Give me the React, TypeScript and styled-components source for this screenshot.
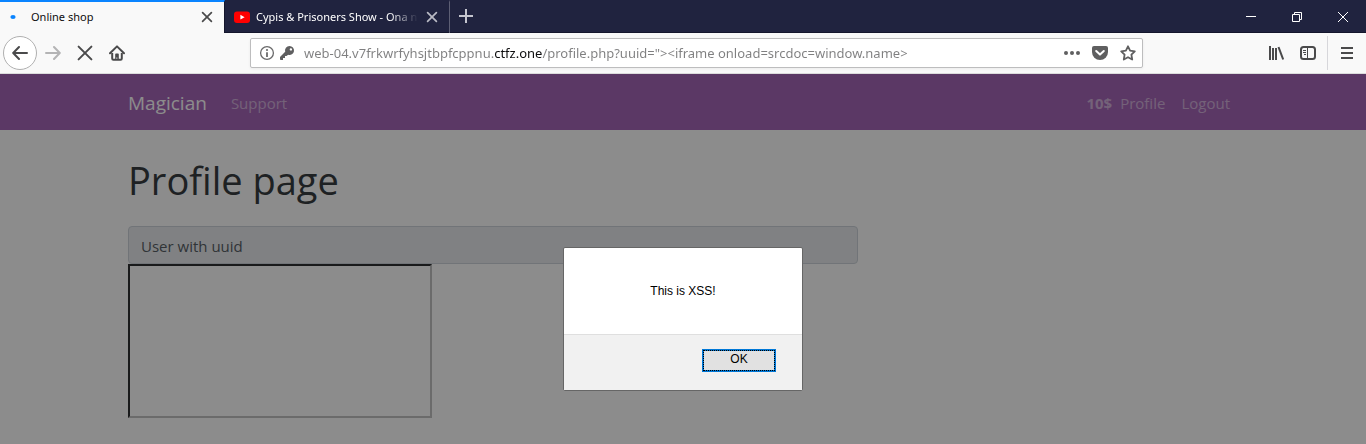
import React from "react";
import styled, { createGlobalStyle } from "styled-components";

const GlobalStyle = createGlobalStyle`
  *, *::before, *::after { box-sizing: border-box; }
  html, body, #root { height: 100%; }
  body {
    margin: 0;
    font-family: "Open Sans", "Noto Sans", sans-serif;
    background: #fff;
  }
  button, input { font-family: inherit; }
`;

const Window = styled.div`
  display: flex;
  flex-direction: column;
  min-height: 100%;
`;

/* ---- tab strip ---- */

const TabStrip = styled.div`
  display: flex;
  height: 33px;
  background: #20233f;
  box-shadow: inset 0 -1px 0 #14162c;
`;

const Tab = styled.div<{ $active?: boolean }>`
  display: flex;
  align-items: center;
  flex: 0 1 225px;
  min-width: 0;
  padding: 0 9px 2px ${(p) => (p.$active ? "5px" : "9px")};
  gap: ${(p) => (p.$active ? "10px" : "6px")};
  color: ${(p) => (p.$active ? "#0c0c0d" : "#ffffff")};
  background: ${(p) => (p.$active ? "#f9f9f9" : "transparent")};
  border-top: 2px solid ${(p) => (p.$active ? "#0a84ff" : "transparent")};
  border-right: 1px solid ${(p) => (p.$active ? "#14162c" : "#5d5f74")};
`;

const TabTitle = styled.span<{ $fade?: boolean }>`
  flex: 1;
  min-width: 0;
  overflow: hidden;
  white-space: nowrap;
  font-family: "Noto Sans", "Open Sans", sans-serif;
  font-size: 11px;
  line-height: 18px;
  ${(p) => p.$fade && "mask-image: linear-gradient(to left, transparent, #000 28px);"}
`;

const GlyphButton = styled.button<{ $color?: string; $width?: number; $height?: number }>`
  display: flex;
  flex: none;
  align-items: center;
  justify-content: center;
  width: ${(p) => p.$width ?? 16}px;
  height: ${(p) => p.$height ?? 16}px;
  padding: 0;
  border: 0;
  background: none;
  color: ${(p) => p.$color ?? "#4a4a4b"};
`;

const WindowControls = styled.div`
  display: flex;
  margin-left: auto;
`;

/* ---- navigation toolbar ---- */

const Toolbar = styled.div`
  display: flex;
  align-items: center;
  height: 41px;
  padding-left: 3px;
  background: #f9f9f9;
  border-bottom: 1px solid #dcdcdc;
`;

const BackButton = styled.button`
  display: flex;
  flex: none;
  align-items: center;
  justify-content: center;
  width: 34px;
  height: 34px;
  padding: 0;
  border: 1px solid #b0b0b0;
  border-radius: 50%;
  background: #fff;
  color: #4a4a4b;
`;

const Spacer = styled.div`
  flex: 0 1 117px;
`;

const UrlBar = styled.div`
  display: flex;
  flex: 1;
  align-items: center;
  min-width: 0;
  height: 30px;
  padding: 0 6px 0 8px;
  gap: 4px;
  border: 1px solid #bdbdbe;
  border-radius: 2px;
  background: #fff;
  box-shadow: 0 1px 3px rgba(0, 0, 0, 0.06);
`;

const UrlInput = styled.input`
  flex: 1;
  min-width: 0;
  height: 24px;
  margin-left: 5px;
  padding: 0;
  border: 0;
  outline: 0;
  font-family: "Noto Sans", "Open Sans", sans-serif;
  font-size: 13px;
  color: transparent;
  caret-color: #0c0c0d;
  background: linear-gradient(90deg, #7f7f80 190px, #0c0c0d 190px 238px, #7f7f80 238px);
  background-clip: text;
  -webkit-background-clip: text;
`;

const UrlActions = styled.div`
  display: flex;
  gap: 12px;
`;

const Divider = styled.div`
  width: 1px;
  height: 34px;
  margin-left: 3px;
  background: #d7d7db;
`;

/* ---- web page ---- */

const Page = styled.main`
  position: relative;
  flex: 1;
  background: #fff;
  color: #383c41;
`;

const Container = styled.div`
  width: 100%;
  max-width: 1140px;
  margin: 0 auto;
  padding: 0 15px;
`;

const Navbar = styled.nav`
  background: #a766b9;
`;

const NavRow = styled(Container)`
  display: flex;
  align-items: center;
  height: 56px;
  padding-top: 2px;
`;

const Brand = styled.a`
  margin-right: 16px;
  color: #fff;
  font-size: 19px;
  line-height: 30px;
  text-decoration: none;
`;

const NavLink = styled.a`
  padding: 8px;
  color: rgba(255, 255, 255, 0.5);
  font-size: 15px;
  line-height: 24px;
  text-decoration: none;
`;

const Balance = styled.strong`
  margin-left: auto;
  color: rgba(255, 255, 255, 0.5);
  font-size: 15px;
  line-height: 24px;
`;

const Title = styled.h1`
  margin: 0 0 22px;
  padding-top: 26px;
  font-size: 38px;
  font-weight: 400;
  line-height: 48px;
`;

const Column = styled.div`
  width: 100%;
  max-width: 730px;
`;

const UserField = styled.div`
  height: 38px;
  padding: 6px 12px;
  border: 1px solid #ced4da;
  border-radius: 4px;
  background: #e9ecef;
  color: #585f66;
  font-size: 15px;
  line-height: 26px;
`;

const Frame = styled.iframe`
  display: block;
  box-sizing: content-box;
  width: 300px;
  height: 150px;
  border: 2px solid;
  border-color: #2f3032 #c3c3c3 #c3c3c3 #2f3032;
`;

const Overlay = styled.div`
  position: absolute;
  inset: 0;
  display: flex;
  align-items: flex-start;
  justify-content: center;
  padding-top: 173px;
  background: rgba(0, 0, 0, 0.45);
`;

const Dialog = styled.div`
  width: 240px;
  border: 1px solid #666;
  border-radius: 2px;
  background: #fff;
  color: #000;
  font-family: "Liberation Sans", Arial, sans-serif;
  font-size: 12px;
`;

const DialogMessage = styled.p`
  margin: 0;
  padding: 35px 20px;
  line-height: 16px;
  text-align: center;
`;

const DialogFooter = styled.div`
  display: flex;
  justify-content: flex-end;
  padding: 14px 26px 18px;
  border-top: 1px solid #dfdfdf;
  background: #f1f1f1;
`;

const OkButton = styled.button`
  display: flex;
  width: 74px;
  height: 23px;
  padding: 0;
  border: 1px solid #0078d7;
  background: #0078d7;
  color: #000;
  font-size: 12px;
  line-height: 17px;
`;

const FocusRing = styled.span`
  flex: 1;
  height: 21px;
  border: 1px dotted #000;
  background: #e1e1e1 padding-box;
`;

/* ---- drawings ---- */

const Icon = ({ size = 16, children }: { size?: number; children: React.ReactNode }) => (
  <svg width={size} height={size} viewBox={`0 0 ${size} ${size}`} fill="none" stroke="currentColor" aria-hidden="true">
    {children}
  </svg>
);

const Cross = ({ inset, weight }: { inset: number; weight: number }) => (
  <Icon>
    <path
      d={`M${inset} ${inset}L${16 - inset} ${16 - inset}M${16 - inset} ${inset}L${inset} ${16 - inset}`}
      strokeWidth={weight}
      strokeLinecap="round"
    />
  </Icon>
);

const PAGE_URL = 'web-04.v7frkwrfyhsjtbpfcppnu.ctfz.one/profile.php?uuid="><iframe onload=srcdoc=window.name>';

export default function App() {
  return (
    <>
      <GlobalStyle />
      <Window>
        <TabStrip>
          <Tab $active>
            <Icon>
              <ellipse cx="8" cy="8" rx="2.6" ry="2" fill="#0a84ff" stroke="none" />
            </Icon>
            <TabTitle>Online shop</TabTitle>
            <GlyphButton aria-label="Close tab">
              <Cross inset={3.6} weight={1.7} />
            </GlyphButton>
          </Tab>
          <Tab>
            <Icon>
              <rect x="0" y="2.5" width="16" height="11.5" rx="3" fill="#f00" stroke="none" />
              <path d="M6.4 5.8v4.8l4.2-2.4z" fill="#fff" stroke="none" />
            </Icon>
            <TabTitle $fade>Cypis &amp; Prisoners Show - Ona n</TabTitle>
            <GlyphButton aria-label="Close tab" $color="#b9bac4">
              <Cross inset={3.6} weight={1.7} />
            </GlyphButton>
          </Tab>
          <GlyphButton aria-label="New tab" $color="#c4c5cf" $width={32} $height={32}>
            <Icon>
              <path d="M8 1v14M1 8h14" strokeWidth="2" />
            </Icon>
          </GlyphButton>
          <WindowControls>
            <GlyphButton aria-label="Minimize" $color="#fff" $width={46} $height={32}>
              <Icon>
                <path d="M3 8.5h10" />
              </Icon>
            </GlyphButton>
            <GlyphButton aria-label="Restore" $color="#fff" $width={46} $height={32}>
              <Icon>
                <path d="M3.5 6.5h7v7h-7zM5.5 6.5v-2h7v7h-2" />
              </Icon>
            </GlyphButton>
            <GlyphButton aria-label="Close" $color="#fff" $width={46} $height={32}>
              <Icon>
                <path d="M3 4l10 10M13 4L3 14" />
              </Icon>
            </GlyphButton>
          </WindowControls>
        </TabStrip>

        <Toolbar>
          <BackButton aria-label="Back">
            <Icon>
              <path d="M15 8H1.5M7 2L1.2 8 7 14" strokeWidth="2" strokeLinecap="round" strokeLinejoin="round" />
            </Icon>
          </BackButton>
          <GlyphButton aria-label="Forward" $color="#b4b4b5" $width={32} $height={32}>
            <Icon>
              <path d="M1 8h13.5M9 2l5.8 6L9 14" strokeWidth="2" strokeLinecap="round" strokeLinejoin="round" />
            </Icon>
          </GlyphButton>
          <GlyphButton aria-label="Stop" $width={32} $height={32}>
            <Cross inset={1.6} weight={2} />
          </GlyphButton>
          <GlyphButton aria-label="Home" $width={32} $height={32}>
            <Icon>
              <path d="M1 8.2L8 1.4l7 6.8" strokeWidth="2" strokeLinecap="round" strokeLinejoin="round" />
              <path d="M3.2 8v5.6q0 1.2 1.2 1.2h7.2q1.2 0 1.2-1.2V8" strokeWidth="2" />
              <path d="M6.2 14.5V9.2q0-.8.8-.8h2q.8 0 .8.8v5.3h-1.5v-2h-.9v2z" fill="currentColor" stroke="none" />
            </Icon>
          </GlyphButton>
          <Spacer />
          <UrlBar>
            <GlyphButton aria-label="Site information" $color="#6a6a6b">
              <Icon>
                <circle cx="8" cy="8" r="6.4" strokeWidth="1.3" />
                <path d="M8 7.2V12" strokeWidth="1.8" />
                <circle cx="8" cy="5" r="1.1" fill="currentColor" stroke="none" />
              </Icon>
            </GlyphButton>
            <GlyphButton aria-label="Saved login" $color="#5f5f60">
              <Icon>
                <path
                  fillRule="evenodd"
                  d="M10.5 1a4.5 4.5 0 0 0-4.3 5.8L1 12v2.2q0 .8.8.8H4v-2h2v-2h1.5l1.7-1.2A4.5 4.5 0 1 0 10.5 1zm1.4 2.2a1.2 1.2 0 1 1 0 2.4 1.2 1.2 0 0 1 0-2.4z"
                  fill="currentColor"
                  stroke="none"
                />
              </Icon>
            </GlyphButton>
            <UrlInput aria-label="Address" defaultValue={PAGE_URL} spellCheck={false} />
            <UrlActions>
              <GlyphButton aria-label="Page actions" $color="#5f5f60">
                <Icon>
                  <g fill="currentColor" stroke="none">
                    <circle cx="2" cy="8" r="2" />
                    <circle cx="8" cy="8" r="2" />
                    <circle cx="14" cy="8" r="2" />
                  </g>
                </Icon>
              </GlyphButton>
              <GlyphButton aria-label="Save to Pocket" $color="#5f5f60">
                <Icon>
                  <path d="M2 1h12q2 0 2 2v4a8 8 0 0 1-16 0V3q0-2 2-2z" fill="currentColor" stroke="none" />
                  <path d="M4.2 6L8 9.6 11.8 6" stroke="#fff" strokeWidth="2" strokeLinecap="round" strokeLinejoin="round" />
                </Icon>
              </GlyphButton>
              <GlyphButton aria-label="Bookmark" $color="#5f5f60">
                <Icon>
                  <path
                    d="M8 1.3l2.1 4.3 4.7.7-3.4 3.4.8 4.8L8 12.2l-4.2 2.3.8-4.8L1.2 6.3l4.7-.7z"
                    strokeWidth="1.8"
                    strokeLinejoin="round"
                  />
                </Icon>
              </GlyphButton>
            </UrlActions>
          </UrlBar>
          <Spacer />
          <GlyphButton aria-label="Library" $width={32} $height={32}>
            <Icon>
              <path d="M2 1v14M5 3v12M8 3v12" strokeWidth="2" />
              <path d="M10.5 2l4.7 12.5" strokeWidth="2" />
            </Icon>
          </GlyphButton>
          <GlyphButton aria-label="Sidebars" $width={32} $height={32}>
            <Icon>
              <rect x="1" y="2" width="14" height="12" rx="2.5" strokeWidth="2" />
              <path d="M7.5 2v12" />
              <path d="M3 5.5h3M3 7.5h3M4 9.5h2" />
            </Icon>
          </GlyphButton>
          <Divider />
          <GlyphButton aria-label="Open menu" $width={38} $height={32}>
            <Icon>
              <path d="M2 3h12M2 8h12M2 13h12" strokeWidth="2" />
            </Icon>
          </GlyphButton>
        </Toolbar>

        <Page>
          <Navbar>
            <NavRow>
              <Brand href="#">Magician</Brand>
              <NavLink href="#">Support</NavLink>
              <Balance>10$</Balance>
              <NavLink href="#">Profile</NavLink>
              <NavLink href="#">Logout</NavLink>
            </NavRow>
          </Navbar>
          <Container>
            <Title>Profile page</Title>
            <Column>
              <UserField>User with uuid</UserField>
              <Frame title="Embedded frame" />
            </Column>
          </Container>
          <Overlay>
            <Dialog role="alertdialog" aria-modal="true" aria-describedby="alert-message">
              <DialogMessage id="alert-message">This is XSS!</DialogMessage>
              <DialogFooter>
                <OkButton>
                  <FocusRing>OK</FocusRing>
                </OkButton>
              </DialogFooter>
            </Dialog>
          </Overlay>
        </Page>
      </Window>
    </>
  );
}
